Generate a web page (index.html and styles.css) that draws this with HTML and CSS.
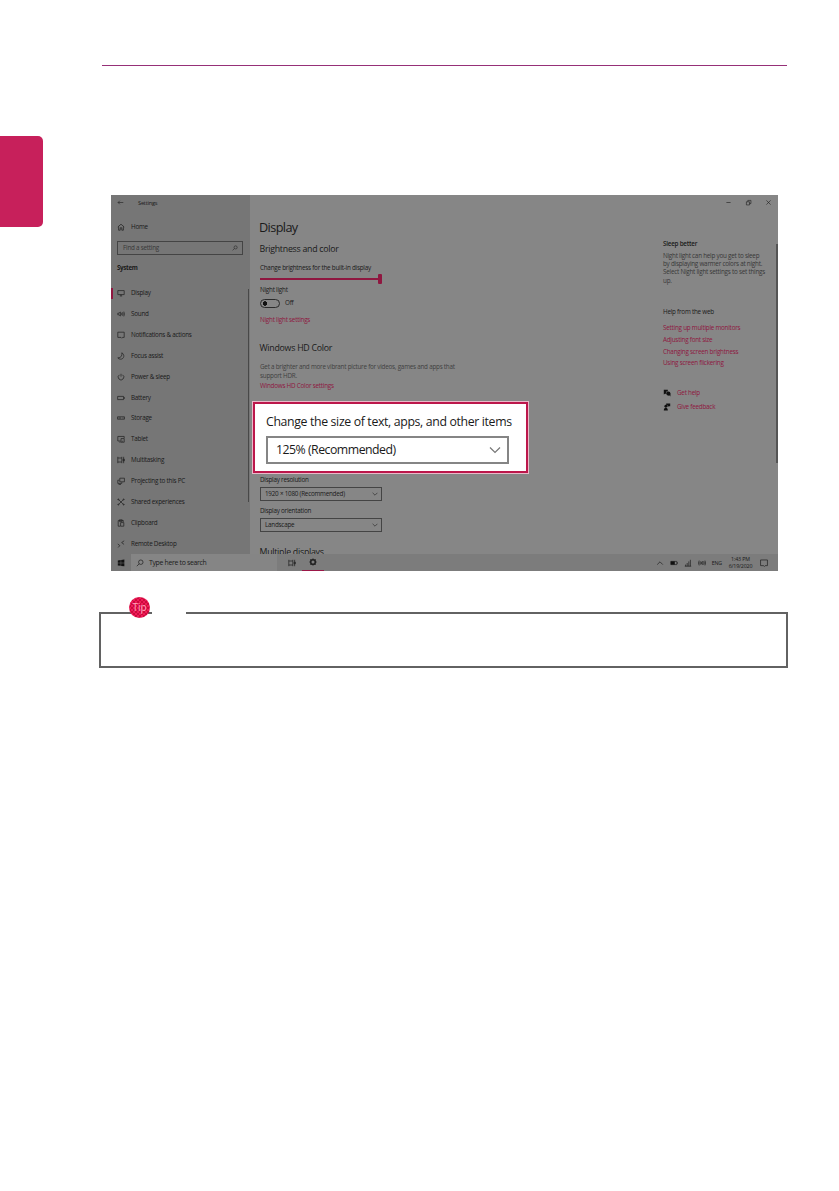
FILE: index.html
```html
<!DOCTYPE html>
<html lang="en">

<head>
    <meta charset="UTF-8">
    <meta name="viewport" content="width=device-width, initial-scale=1.0">
    <title>Display settings</title>

    <link rel="stylesheet" href="styles.css">
</head>

<body>
    <div class="sideTab"></div>

    <main class="page">
        <div class="topRule"></div>

        <div class="window">
            <div class="settings">
                <nav class="sidebar">
                    <div class="titleBar">
                        <svg class="back" viewBox="0 0 10 10"><path d="M9 5H1.5M4 2.5L1.5 5L4 7.5"/></svg>
                        <span>Settings</span>
                    </div>
                    <div class="row home">
                        <svg viewBox="0 0 10 10"><path d="M1 5L5 1.5L9 5M2 4.5V9H4V6H6V9H8V4.5"/></svg>
                        <span>Home</span>
                    </div>
                    <div class="search">
                        <span>Find a setting</span>
                        <svg viewBox="0 0 10 10"><circle cx="6" cy="4" r="2.6"/><path d="M4 6L1 9"/></svg>
                    </div>
                    <h3 class="system">System</h3>
                    <div class="menu">
                        <div class="row active"><svg viewBox="0 0 10 10"><path d="M1 2H9V7H1ZM3.5 8.7H6.5M5 7V8.7"/></svg><span>Display</span></div>
                        <div class="row"><svg viewBox="0 0 10 10"><path d="M1 4H2.5L4.2 2.5V7.5L2.5 6H1ZM5.7 3.5Q6.5 5 5.7 6.5M7 2.8Q8.2 5 7 7.2M8.5 2Q10 5 8.5 8"/></svg><span>Sound</span></div>
                        <div class="row"><svg viewBox="0 0 10 10"><path d="M1 1.5H9V8H7L6 9L5 8H1Z"/></svg><span>Notifications &amp; actions</span></div>
                        <div class="row"><svg viewBox="0 0 10 10"><path d="M6 1C10 3 9 9 4.5 9Q2 9 1 7.3C5 7.5 6.8 4.5 6 1Z"/></svg><span>Focus assist</span></div>
                        <div class="row"><svg viewBox="0 0 10 10"><path d="M5 1V4.5M3 2.3A3.5 3.5 0 1 0 7 2.3"/></svg><span>Power &amp; sleep</span></div>
                        <div class="row"><svg viewBox="0 0 10 10"><path d="M.8 3H8.2V7H.8ZM9.3 4V6"/></svg><span>Battery</span></div>
                        <div class="row"><svg viewBox="0 0 10 10"><path d="M.7 3.5H9.3V6.5H.7ZM2 5H5M7 5H8"/></svg><span>Storage</span></div>
                        <div class="row"><svg viewBox="0 0 10 10"><path d="M4.5 7.5H1V1.8H9V4M5 4.5H9V9H5ZM3 9H4.5M6.5 7.8H7.5"/></svg><span>Tablet</span></div>
                        <div class="row"><svg viewBox="0 0 10 10"><path d="M1 1V2.5H6V1M1 9V7.5H6V9M1 2.5V7.5M6 2.5V7.5M8.3 1V9M7.5 4H9.3V6H7.5Z"/></svg><span>Multitasking</span></div>
                        <div class="row"><svg viewBox="0 0 10 10"><path d="M3.5 1.5H9.3V6H3.5ZM3 4H1V8H6V6.5M2 9.3H5"/></svg><span>Projecting to this PC</span></div>
                        <div class="row"><svg viewBox="0 0 10 10"><path d="M2 2L8 8M8 2L2 8"/><circle cx="1.7" cy="1.8" r=".7"/><circle cx="8.3" cy="1.8" r=".7"/><circle cx="1.7" cy="8.2" r=".7"/><circle cx="8.3" cy="8.2" r=".7"/></svg><span>Shared experiences</span></div>
                        <div class="row"><svg viewBox="0 0 10 10"><path d="M4 9H1.5V2H8V3.5M3 1H6.5V3H3ZM4.5 4.5H8.5V9H4.5Z"/></svg><span>Clipboard</span></div>
                        <div class="row"><svg viewBox="0 0 10 10"><path d="M1 5L3.5 7L1.5 9.3M9 1L5.8 3.2L8.8 5.5"/></svg><span>Remote Desktop</span></div>
                    </div>
                    <div class="navScroll"></div>
                </nav>

                <section class="content">
                    <h1>Display</h1>
                    <h2 class="brightTitle">Brightness and color</h2>
                    <p class="brightLabel">Change brightness for the built-in display</p>
                    <div class="slider"><i></i></div>
                    <p class="nightLabel">Night light</p>
                    <div class="toggleRow"><span class="toggle"></span><span>Off</span></div>
                    <a class="link nightLink">Night light settings</a>
                    <h2 class="hdTitle">Windows HD Color</h2>
                    <p class="hdText">Get a brighter and more vibrant picture for videos, games and apps that<br>support HDR.</p>
                    <a class="link hdLink">Windows HD Color settings</a>
                    <p class="resLabel">Display resolution</p>
                    <div class="select"><span>1920 × 1080 (Recommended)</span><svg viewBox="0 0 10 10"><path d="M1 3L5 7L9 3"/></svg></div>
                    <p class="orientLabel">Display orientation</p>
                    <div class="select"><span>Landscape</span><svg viewBox="0 0 10 10"><path d="M1 3L5 7L9 3"/></svg></div>
                    <h2 class="multi">Multiple displays</h2>
                </section>

                <aside class="help">
                    <div class="winButtons">
                        <svg viewBox="0 0 10 10"><path d="M2 5H8"/></svg>
                        <svg viewBox="0 0 10 10"><path d="M2 4H6.5V8.5H2ZM4 4V2H8.5V6.5H6.5"/></svg>
                        <svg viewBox="0 0 10 10"><path d="M2 2L8 8M8 2L2 8"/></svg>
                    </div>
                    <h4>Sleep better</h4>
                    <p class="sleepText">Night light can help you get to sleep<br>by displaying warmer colors at night.<br>Select Night light settings to set things<br>up.</p>
                    <h4 class="webTitle">Help from the web</h4>
                    <div class="links">
                        <a class="link">Setting up multiple monitors</a>
                        <a class="link">Adjusting font size</a>
                        <a class="link">Changing screen brightness</a>
                        <a class="link">Using screen flickering</a>
                    </div>
                    <div class="support">
                        <svg viewBox="0 0 10 10"><path class="solid" d="M1 1H6V3H4V6H2.5L1 7Z"/><circle class="solid" cx="6.7" cy="5.7" r="2.6"/><path class="solid" d="M7 7L9.3 9.5V6Z"/></svg>
                        <a class="link">Get help</a>
                    </div>
                    <div class="support">
                        <svg viewBox="0 0 10 10"><circle class="solid" cx="3.6" cy="4" r="1.8"/><path class="solid" d="M1 9.5Q1 6 3.5 6Q6 6 6 9.5ZM4 .5H9V4H7L6 5V3H4Z"/></svg>
                        <a class="link">Give feedback</a>
                    </div>
                    <div class="pageScroll"></div>
                </aside>
            </div>

            <div class="taskbar">
                <div class="start"><svg viewBox="0 0 10 10"><path class="solid" d="M1 2L4.7 1.4V4.7H1ZM5.2 1.3L9.2.7V4.7H5.2ZM1 5.2H4.7V8.5L1 8ZM5.2 5.2H9.2V9.2L5.2 8.6Z"/></svg></div>
                <div class="taskSearch">
                    <svg viewBox="0 0 10 10"><circle cx="6" cy="4" r="2.8"/><path d="M4 6L1 9"/></svg>
                    <span>Type here to search</span>
                </div>
                <div class="app"><svg viewBox="0 0 10 10"><path d="M1 1V2.5H6V1M1 9V7.5H6V9M1 2.5V7.5M6 2.5V7.5M8.3 1V9M7.5 4H9.3V6H7.5Z"/></svg></div>
                <div class="app running"><svg viewBox="0 0 10 10"><circle class="gear" cx="5" cy="5" r="2.9"/><path class="teeth" d="M5 .5V2M5 8V9.5M.5 5H2M8 5H9.5M1.8 1.8L2.9 2.9M7.1 7.1L8.2 8.2M8.2 1.8L7.1 2.9M1.8 8.2L2.9 7.1"/></svg></div>
                <div class="tray">
                    <svg viewBox="0 0 10 10"><path d="M1.5 7L5 3.5L8.5 7"/></svg>
                    <svg viewBox="0 0 10 10"><path d="M1 3H8.5V7H1ZM9.5 4V6"/><path class="solid" d="M1 3H6V7H1Z"/></svg>
                    <svg viewBox="0 0 10 10"><path d="M2 9V7M4 9V5M6 9V3M8 9V1M1 9H9"/></svg>
                    <svg viewBox="0 0 10 10"><path d="M3 3Q1.8 5 3 7M1.5 2Q-.2 5 1.5 8M4 4H5L6 3V7L5 6H4ZM7.3 3Q8.3 5 7.3 7M8.7 2Q10.2 5 8.7 8"/></svg>
                    <span>ENG</span>
                    <span class="clock">1:43 PM<br>6/19/2020</span>
                    <svg viewBox="0 0 10 10"><path d="M.7 1.2H9.3V8.3H6.5L5.5 9.3L4.5 8.3H.7Z"/></svg>
                </div>
            </div>

            <div class="callout">
                <p>Change the size of text, apps, and other items</p>
                <div class="scale"><span>125% (Recommended)</span><svg viewBox="0 0 12 12"><path d="M1 3.5L6 8.5L11 3.5"/></svg></div>
            </div>
        </div>

        <div class="tipBox">
            <div class="tipGap"></div>
            <div class="tipBadge">Tip</div>
        </div>
    </main>
</body>

</html>
```
FILE: styles.css
```css
*{
    margin: 0;
    padding: 0;
    box-sizing: border-box;
}

body{
    display: grid;
    grid-template-columns: 43px 1fr;
    min-height: 1191px;
    background-color: white;
    font-family: "Open Sans", "Noto Sans", sans-serif;
    color: #1a1a1a;
}

.sideTab{
    height: 91px;
    margin-top: 136px;
    background-color: #c7205b;
    border-radius: 0 5px 5px 0;
}

.page{
    padding: 65px 51px 0 56px;
}

.topRule{
    height: 1px;
    width: 685px;
    margin-left: 3px;
    background-color: #963078;
}

svg{
    display: block;
    flex: none;
    width: 8px;
    height: 8px;
    fill: none;
    stroke: #222;
    stroke-width: 0.9;
}

svg .solid{
    fill: #111;
    stroke: none;
}

.window{
    position: relative;
    width: 667px;
    height: 376px;
    margin: 129px 0 0 12px;
    background-color: #868686;
    font-size: 6.3px;
    line-height: 10px;
    letter-spacing: -0.23px;
    white-space: nowrap;
    overflow: hidden;
}

.settings{
    display: grid;
    grid-template-columns: 139px 1fr 123px;
    height: 359px;
    overflow: hidden;
}

/* left menu */
.sidebar{
    position: relative;
    height: 359px;
    background-color: #767676;
}

.titleBar{
    display: flex;
    align-items: center;
    height: 15px;
    padding-left: 6px;
    gap: 14px;
    font-size: 5.7px;
}

.back{
    width: 7px;
    height: 7px;
}

.row{
    display: flex;
    align-items: center;
    height: 20.87px;
    padding-left: 6px;
    gap: 6px;
}

.home{
    margin-top: 7px;
}

.search{
    display: flex;
    align-items: center;
    justify-content: space-between;
    width: 126px;
    height: 14px;
    margin: 3px 0 0 6px;
    padding: 0 4px 0 5px;
    border: 1px solid #444;
    color: #383838;
}

.search svg{
    width: 6px;
    height: 6px;
}

.system{
    height: 10px;
    margin: 8px 0 10px 6px;
    font-size: 6.2px;
    letter-spacing: -0.3px;
}

.active{
    background: linear-gradient(#8f1740, #8f1740) no-repeat 0 50% / 2px 11px;
}

.navScroll{
    position: absolute;
    top: 94px;
    right: 1px;
    width: 1px;
    height: 213px;
    background-color: #484848;
}

/* display options */
.content{
    padding-left: 10px;
}

h1{
    height: 20px;
    margin: 22px 0 0 -1px;
    font-size: 12.7px;
    font-weight: 400;
    line-height: 20px;
    letter-spacing: -0.6px;
}

h2{
    height: 12px;
    margin-left: -0.5px;
    font-size: 8.8px;
    font-weight: 400;
    line-height: 12px;
    letter-spacing: -0.26px;
}

.brightTitle{
    margin-top: 6px;
}

.brightLabel{
    margin-top: 8px;
}

.slider{
    display: flex;
    align-items: center;
    justify-content: flex-end;
    width: 122px;
    height: 12px;
    background: linear-gradient(#8f1740, #8f1740) no-repeat 0 50% / 120px 2px;
}

.slider i{
    width: 4px;
    height: 10px;
    border-radius: 1px;
    background-color: #8f1740;
}

.nightLabel{
    margin-top: 0;
}

.toggleRow{
    display: flex;
    align-items: center;
    height: 10px;
    margin-top: 3px;
    gap: 5px;
}

.toggle{
    width: 20px;
    height: 9px;
    border: 1px solid #2b2b2b;
    border-radius: 5px;
    background: radial-gradient(circle at 4px 50%, #111 2px, transparent 2.5px);
}

.link{
    display: block;
    height: 10px;
    color: #8f1740;
}

.nightLink{
    margin-top: 7px;
}

.hdTitle{
    margin-top: 17px;
}

.hdText{
    margin-top: 8px;
    color: #414141;
    line-height: 9px;
}

.hdLink{
    margin-top: 1px;
}

.resLabel{
    margin-top: 84px;
}

.select{
    display: flex;
    align-items: center;
    justify-content: space-between;
    width: 122px;
    height: 14px;
    margin-top: 2px;
    padding: 0 3px 0 4px;
    border: 1px solid #444;
}

.select svg{
    width: 6px;
    height: 6px;
    stroke-width: 1;
}

.orientLabel{
    margin-top: 5px;
}

.multi{
    margin-top: 14px;
}

/* right column */
.help{
    position: relative;
    padding-left: 8px;
}

.winButtons{
    display: flex;
    align-items: center;
    justify-content: flex-end;
    gap: 13px;
    height: 15px;
    padding-right: 6px;
}

.winButtons svg{
    width: 7px;
    height: 7px;
}

h4{
    height: 10px;
    margin-top: 29px;
    font-size: 6.3px;
    font-weight: 600;
}

.sleepText{
    margin-top: 3px;
    color: #383838;
    line-height: 8.2px;
}

.webTitle{
    margin-top: 22px;
    font-weight: 400;
}

.links{
    display: grid;
    gap: 1.9px;
    margin: 6px 0 18px;
}

.support{
    display: flex;
    align-items: center;
    height: 13.6px;
    gap: 6px;
}

.pageScroll{
    position: absolute;
    top: 49px;
    right: 0;
    width: 2px;
    height: 219px;
    background-color: #555;
}

/* taskbar */
.taskbar{
    display: flex;
    height: 17px;
    background-color: #7c7c7c;
}

.start{
    display: flex;
    align-items: center;
    width: 20px;
    padding-left: 6px;
    background-color: #767676;
}

.taskSearch{
    display: flex;
    align-items: center;
    width: 146px;
    padding-left: 5px;
    gap: 5px;
    background-color: #858585;
    font-size: 6.9px;
    letter-spacing: -0.32px;
}

.app{
    display: flex;
    align-items: center;
    justify-content: center;
    width: 22px;
    margin-left: 4px;
}

.running{
    margin-left: -1px;
    border-bottom: 1px solid #9b1747;
}

.gear{
    stroke-width: 2;
}

.teeth{
    stroke-width: 1.4;
}

.tray{
    display: flex;
    align-items: center;
    flex: 1;
    justify-content: flex-end;
    padding-right: 10px;
    gap: 6px;
    font-size: 5.3px;
    letter-spacing: -0.15px;
}

.clock{
    width: 25px;
    margin-right: 1px;
    line-height: 7px;
    text-align: center;
}

/* enlarged scale option */
.callout{
    position: absolute;
    left: 141px;
    top: 206px;
    width: 277px;
    height: 73px;
    padding: 9px 0 0 11px;
    border: 3px solid #bc174b;
    outline: 1px solid #e9b9c9;
    outline-offset: -1px;
    background-color: white;
    font-size: 12.3px;
    line-height: 18px;
    letter-spacing: -0.35px;
}

.scale{
    display: flex;
    align-items: center;
    justify-content: space-between;
    width: 243px;
    height: 28px;
    margin-top: 5px;
    padding: 0 6px 0 8px;
    border: 2px solid #858585;
    letter-spacing: -0.5px;
}

.scale svg{
    width: 12px;
    height: 12px;
    stroke: #777;
    stroke-width: 1.2;
}

/* tip */
.tipBox{
    position: relative;
    width: 689px;
    height: 56px;
    margin-top: 41px;
    border: 2px solid #626262;
}

.tipGap{
    position: absolute;
    left: 51px;
    top: -2px;
    width: 34px;
    height: 2px;
    background-color: white;
}

.tipBadge{
    position: absolute;
    left: 28px;
    top: -17px;
    width: 21px;
    height: 21px;
    border-radius: 50%;
    background: repeating-conic-gradient(#f01a58 0 25%, #cb0b3c 0 50%) 0 0 / 4px 4px;
    color: #ffa5bd;
    font-size: 10px;
    line-height: 20px;
    text-align: center;
}
```
